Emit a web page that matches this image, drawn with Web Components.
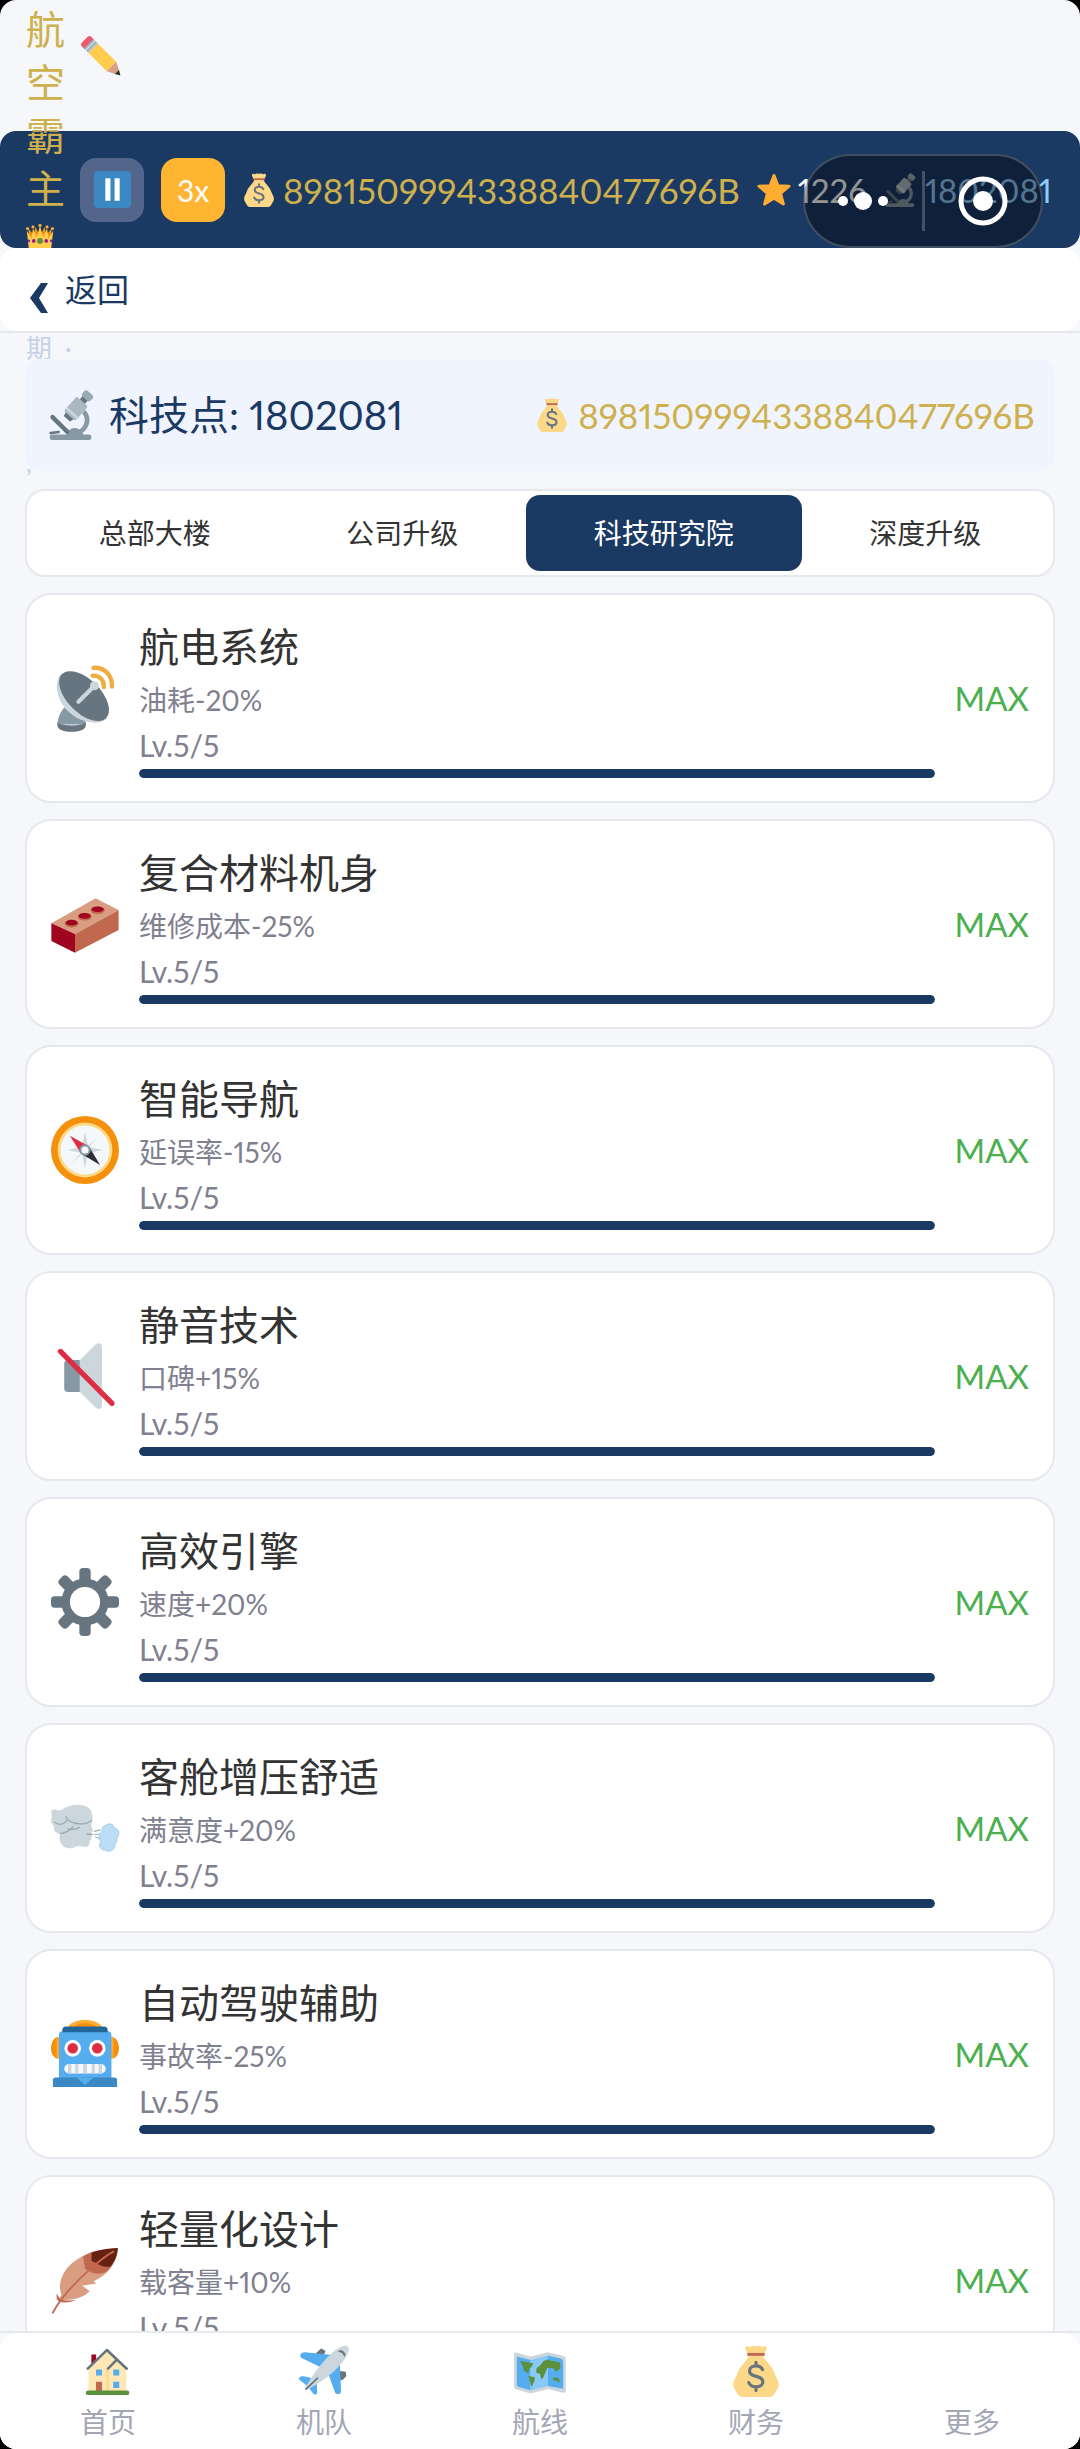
<!DOCTYPE html>
<html lang="zh-CN">
<head>
<meta charset="utf-8">
<meta name="viewport" content="width=device-width, initial-scale=1">
<title>航空霸主</title>
<style>
  html { background: #000; }
  body {
    margin: 0;
    font-family: Lato, "Noto Sans CJK SC", sans-serif;
    font-variant-numeric: proportional-nums;
    color: #333;
  }
</style>
</head>
<body>
<game-app>
  <game-header slot="header" name="航空霸主" money="8981509994338840477696B" stars="1226" points="1802081"></game-header>
  <back-bar slot="header">返回</back-bar>
  <points-panel points="1802081" money="8981509994338840477696B"></points-panel>
  <tab-bar>
    <tab-item>总部大楼</tab-item>
    <tab-item>公司升级</tab-item>
    <tab-item selected>科技研究院</tab-item>
    <tab-item>深度升级</tab-item>
  </tab-bar>
  <tech-card icon="satellite" name="航电系统" effect="油耗-20%" level="5" max="5"></tech-card>
  <tech-card icon="brick" name="复合材料机身" effect="维修成本-25%" level="5" max="5"></tech-card>
  <tech-card icon="compass" name="智能导航" effect="延误率-15%" level="5" max="5"></tech-card>
  <tech-card icon="mute" name="静音技术" effect="口碑+15%" level="5" max="5"></tech-card>
  <tech-card icon="gear" name="高效引擎" effect="速度+20%" level="5" max="5"></tech-card>
  <tech-card icon="wind" name="客舱增压舒适" effect="满意度+20%" level="5" max="5"></tech-card>
  <tech-card icon="robot" name="自动驾驶辅助" effect="事故率-25%" level="5" max="5"></tech-card>
  <tech-card icon="feather" name="轻量化设计" effect="载客量+10%" level="5" max="5"></tech-card>
  <nav-bar slot="footer">
    <nav-link icon="house">首页</nav-link>
    <nav-link icon="plane">机队</nav-link>
    <nav-link icon="map">航线</nav-link>
    <nav-link icon="bag">财务</nav-link>
    <nav-link icon="none">更多</nav-link>
  </nav-bar>
</game-app>

<script>
// All icons are drawn on a 36x36 grid.
const ICONS = {
  none: '',
  star: `<path fill="#ffac33" stroke="#ffac33" stroke-width="3" stroke-linejoin="round" d="M18 2.500l4.200 10.800L34 14l-9 7.500 3 11.500L18 26.700 8 33l3-11.500L2 14l11.800-.7z"/>`,
  pencil: `<g transform="rotate(45 18 18)">
      <path fill="#ea596e" d="M-4 14.500a2.500 2.500 0 0 1 2.500-2.500H2v12h-3.500A2.500 2.500 0 0 1-4 21.500z"/>
      <path fill="#99aab5" d="M1 12h6v12H1z"/>
      <path fill="#ccd6dd" d="M2.500 12H4v12H2.500zM5.500 12h1v12h-1z"/>
      <path fill="#ffcc4d" d="M7 12h23v12H7z"/>
      <path fill="#d99e82" d="M30 12l10 5v2l-10 5z"/>
      <path fill="#292f33" d="M37 15.500l4.500 2.500-4.500 2.500z"/>
    </g>`,
  crown: `<path fill="#f4900c" d="M4 18l-1-11 7 8 2-10 5 9 1-12 1 12 5-9 2 10 7-8-1 11z"/>
    <path fill="#ffcc4d" d="M4 36L1 10l6 9 2-12 5 11 4-14 4 14 5-11 2 12 6-9-3 26z"/>
    <g fill="#ffac33"><circle cx="2" cy="7" r="2"/><circle cx="9" cy="5" r="2"/><circle cx="18" cy="3" r="2"/><circle cx="27" cy="5" r="2"/><circle cx="34" cy="7" r="2"/></g>
    <circle cx="18" cy="23" r="3.800" fill="#5c913b"/>
    <g fill="#9b1b8f"><circle cx="10" cy="23" r="2.400"/><circle cx="26" cy="23" r="2.400"/><circle cx="3.500" cy="23" r="1.800"/><circle cx="32.500" cy="23" r="1.800"/></g>`,
  pause: `<rect width="36" height="36" rx="4" fill="#3b88c3"/>
    <path fill="#fff" d="M11 7h5v22h-5zM20 7h5v22h-5z"/>`,
  bag: `<path fill="#fdd888" d="M11.500 4.500C9.500 2 11 .3 13 1c1.500.8 2-.9 3.500-.5.8.5 2.200.5 3 0 1.500-.4 2 1.300 3.500.5 2-.7 3.500 1 1.500 3.500L23 8c2.800 4.500 6.500 7 8.200 12.500.8 2.500 2.800 4 2.500 7.500-.2 2.500-2 3.500-2.700 5.500-1 2-3 2.500-5 2.500H10c-2 0-4-.5-5-2.500-.7-2-2.500-3-2.700-5.500-.3-3.500 1.700-5 2.500-7.500C6.500 15 10.200 12.500 13 8z"/>
    <path fill="#bf6952" d="M12 5.500h12v2H12z"/>
    <path fill="none" stroke="#67757f" stroke-width="2.200" stroke-linecap="round" d="M22.500 17c-.8-1.800-2.500-2.500-4.500-2.500-2.600 0-4.500 1.400-4.500 3.500 0 5 9.300 2.400 9.300 7.500 0 2-2 3.500-4.800 3.500-2.400 0-4.200-.9-5-3M18 12v2.500M18 29v2.500"/>`,
  microscope: `<path fill="none" stroke="#8899a6" stroke-width="3.400" d="M26.500 15.500c4.500 5.500 2.500 12.500-5 16"/>
    <path fill="#8899a6" d="M3.500 32H14c1-3 4-5 7-4.500 2.500.3 4.500 2 5 4.500h4.500c2 0 2 4 0 4h-27c-2 0-2-4 0-4z"/>
    <path stroke="#66757f" stroke-width="3.200" stroke-linecap="round" d="M4 19.500l10.500 10.500"/>
    <path stroke="#66757f" stroke-width="1.800" stroke-linecap="round" d="M2.500 31l6-.8"/>
    <g transform="translate(21 13.300) rotate(42)">
      <path fill="#66757f" d="M-2.500-10h5v4h-5zM-4 6h8l-1 4h-6z"/>
      <rect x="-4" y="-15" width="8" height="5.500" rx="2" fill="#9aaab4"/>
      <rect x="-5.500" y="-6.800" width="11" height="14" rx="1.500" fill="#aab8c2"/>
      <path fill="#ccd6dd" d="M-5.500 3.500h11v2h-11z"/>
    </g>`,
  satellite: `<path fill="#8899a6" d="M7 23c-2.500 3-3.600 6-3.600 9h15c0-2.500-.8-4.500-2.400-6z"/>
    <path fill="#66757f" d="M3.400 31c2 2 13 2 15 0v1.500c0 4.500-15 4.500-15 0z"/>
    <path fill="#ccd6dd" d="M5.500 5C1.500 9 2.500 18 8.500 24.500S25.500 33 29.500 29z"/>
    <ellipse cx="17.500" cy="17" rx="16.500" ry="8.800" fill="#66757f" transform="rotate(45 17.500 17)"/>
    <path stroke="#ccd6dd" stroke-width="2.200" stroke-linecap="round" d="M14.500 20l8-8"/>
    <circle cx="23" cy="11.500" r="2.400" fill="#ccd6dd"/>
    <path fill="none" stroke="#f0ab41" stroke-width="2.300" stroke-linecap="round" d="M22.500 2c6-.4 10 4 9.800 10M22 6.200c3.800-.2 6.200 2.400 6 6"/>`,
  brick: `<path fill="#d99e82" d="M.2 17.600L23.600 4.400l12.200 6.200-23.100 12.700z"/>
    <path fill="#a0041e" d="M.2 17.600l12.500 5.700v9.900L.2 27z"/>
    <path fill="#c1694f" d="M12.700 23.300l23.100-12.700v10.600l-23.100 12z"/>
    <g fill="#c1694f"><ellipse cx="10.900" cy="17.800" rx="3.700" ry="2"/><ellipse cx="17.800" cy="14.200" rx="3.700" ry="2"/><ellipse cx="24.700" cy="10.700" rx="3.700" ry="2"/></g>
    <g fill="#a0041e"><ellipse cx="10.900" cy="17.300" rx="3.200" ry="1.500"/><ellipse cx="17.800" cy="13.700" rx="3.200" ry="1.500"/><ellipse cx="24.700" cy="10.200" rx="3.200" ry="1.500"/></g>`,
  compass: `<circle cx="18" cy="18" r="18" fill="#f4900c"/>
    <circle cx="18" cy="18" r="14.500" fill="#ffd983"/>
    <circle cx="18" cy="18" r="13" fill="#f5f8fa"/>
    <path fill="#ccd6dd" d="M18 8.500l1.500 7.500 5.500-5-5 5.500 7.500 1.500-7.500 1.500 5 5.500-5.500-5L18 27.500 16.500 20 11 25l5-5.500L8.500 18l7.500-1.500-5-5.500 5.500 5z"/>
    <path fill="#dd2e44" d="M10 10.500l10 5.500-4 4z"/>
    <path fill="#292f33" d="M26 26l-10-6 4-4z"/>
    <circle cx="18" cy="18" r="3" fill="#8899a6"/>
    <circle cx="18" cy="18" r="1.900" fill="#f5f8fa"/>`,
  mute: `<path fill="#8899a6" d="M9 9.500h7v17H9a2 2 0 0 1-2-2v-13a2 2 0 0 1 2-2z"/>
    <path fill="#ccd6dd" d="M15.200 9.700L23.500 1.500C25 .2 27 .5 27 2.500v31c0 2-2 2.500-3.500 1.200l-8.300-8.300z"/>
    <path stroke="#dd2e44" stroke-width="2.800" stroke-linecap="round" d="M5 5l27.300 27.500"/>`,
  gear: `<g fill="#66757f">
      <rect x="15" width="6" height="36" rx="2"/>
      <rect x="15" width="6" height="36" rx="2" transform="rotate(45 18 18)"/>
      <rect x="15" width="6" height="36" rx="2" transform="rotate(90 18 18)"/>
      <rect x="15" width="6" height="36" rx="2" transform="rotate(135 18 18)"/>
      <circle cx="18" cy="18" r="12.500"/>
    </g>
    <circle cx="18" cy="18" r="8" fill="#fff"/>`,
  wind: `<path fill="#ccd6dd" d="M.2 9.400C.5 7.500 3 8.500 5 8.800 8 6.500 12 5.500 15.500 5.800 20 6 22.200 9 21.900 12.500c.3 1.500-.3 2.500-.6 3.800 0 1.200.7 2 1.100 3.200-.8.600-1.200.8-1 1.800.8.700.5 1 0 1.600.2.900 0 1.600-.9 2-.1 1.600-.4 3-1.700 3-1.500.4-3-.8-4.800-.3-2 .6-3.500 1.600-5.700 1-3-.8-4.400-4.400-3.600-7.400-2-.2-3.800-2-3-4.200-1.600-.9-2-3-1.300-4.600z"/>
    <path fill="none" stroke="#99aab5" stroke-width=".7" stroke-linecap="round" d="M2 15c2 1.500 4.500 1.200 6.500-.8M8 12c1 3.500 9 5.500 13.500 2M5 20.800c2.500 0 5.500-1.500 6.500-3.500M9 18.500c3 .5 4.500.3 6-.8M19 21.300h2.800"/>
    <path fill="none" stroke="#99aab5" stroke-width=".6" stroke-linecap="round" d="M23 19.800l3-.8M23 21.300h3.500M23.500 22.800l3 1"/>
    <path fill="#bbddf5" stroke="#99c4e4" stroke-width=".4" d="M27 20c-.5-2.500 1.500-3.500 2-3.300 1.500-1.700 4.300-.8 4.500 1.300 2.500.2 3.500 3.500 1.200 5.400.8 1.600-.2 2.400-.9 3 .8 3.500-3.500 4.700-4.800 3.400-2.500.3-4.500-2.500-2.600-4.600-1.600-1.600-1-4.300.6-5.200z"/>`,
  robot: `<path fill="#ffac33" d="M9 4c1.500-5.300 16.500-5.300 18 0z"/>
    <path fill="#f4900c" d="M12 4c2-3 10-3 12 0z"/>
    <path fill="#f4900c" d="M4 9C1.500 9 0 12 0 15s1.500 5.500 4 5.500zM32 9c2.500 0 4 3 4 6s-1.500 5.500-4 5.500z"/>
    <path fill="#ffac33" d="M3 9.200h1.500v11H3zM31.500 9.200H33v11h-1.500z"/>
    <rect x="4.200" y="6" width="27.800" height="26" rx="2" fill="#55acee"/>
    <path fill="#226699" d="M8 3.500h20a2 2 0 0 1 2 2v1H6v-1a2 2 0 0 1 2-2z"/>
    <circle cx="11.500" cy="15" r="4.400" fill="#fff"/><circle cx="24.500" cy="15" r="4.400" fill="#fff"/>
    <circle cx="11.500" cy="15" r="2.800" fill="#dd2e44"/><circle cx="24.500" cy="15" r="2.800" fill="#dd2e44"/>
    <rect x="7" y="23.300" width="22" height="5" rx="2.500" fill="#f5f8fa"/>
    <path fill="#ccd6dd" d="M9 23.300h1.800v5H9zM12.800 23.300h1.700v5h-1.700zM17 23.300h2v5h-2zM21.500 23.300h1.700v5h-1.700zM25.200 23.300H27v5h-1.800z"/>
    <path fill="#3b88c3" d="M2.500 30.500h31A1.500 1.500 0 0 1 35 32v3.500H1V32a1.500 1.500 0 0 1 1.500-1.500z"/>
    <path fill="#55acee" d="M13.500 30.500h9l-4.500 4z"/>`,
  feather: `<path fill="#d99e82" d="M5.500 26c-1.800-5-.3-10.500 3.700-15C14 6 20.500 3.500 24 2.700L35.300 1c0 5-2.500 9.500-5.800 13-2.200 2-4.500 3.500-7 4.700l1.500 1.100-7.500 1.200 4 3C17.500 27 13 29 4 28.500z"/>
    <path fill="#c1694f" d="M17 5.500c2.500-1.400 5-2.300 7-2.800L35.300 1c0 5-2.500 9.500-5.800 12.500-3 1.500-6.300 1.500-8.500.3L18 12z"/>
    <path fill="#662113" d="M21.500 3.500c5-1.800 9-2.300 13.800-2.500 0 3.500-1.500 7-3.800 9.800-3 .7-5.500-.3-7.500-1.800l-2.500-1z"/>
    <path fill="#c1694f" d="M3 25l2 3.500c3.500.5 6 .3 8.500 0-3 1.300-6 1.800-9 1L3 28z"/>
    <path fill="none" stroke="#c1694f" stroke-width="1" stroke-linecap="round" d="M1 35.300C5 27.500 12 20 21 12c4-3.500 8-7 12-9"/>`,
  house: `<path fill="#a0041e" d="M6.500 6.500h3.300V15H6.500z"/>
    <path fill="#ffe8b6" d="M4.500 16L17.200 4l13.500 12v16H4.500z"/>
    <path fill="#ffcc4d" opacity=".5" d="M17 17h1.500v15H17z"/>
    <path fill="none" stroke="#66757f" stroke-width="1.800" stroke-linecap="round" stroke-linejoin="round" d="M4 16.400L17.200 3.500 31 16.400M18 16.400l5.800-5.900"/>
    <path fill="#55acee" d="M9.700 17h4.200v4.200H9.700zM21.600 17h4.200v4.200h-4.200zM21.600 25.500h4.200v4.200h-4.200z"/>
    <path fill="#c1694f" d="M9.700 25.500h4.200V32H9.700z"/>
    <rect x="2.700" y="31.500" width="30" height="3.200" rx="1.500" fill="#5c913b"/>`,
  plane: `<path fill="#66757f" d="M12 6l4-3.500 3 1.500-1 3zM29 18l4 .5.500 3-3 3-2-1z"/>
    <path fill="#55acee" d="M1.800 6.500c.5-1 1.500-1.500 3-1.500L24 7l-9 8L2.500 9C1.500 8.500 1.500 7.500 1.800 6.500zM29 12l.8 20c0 1.500-1 2-2 2s-2-.5-2.300-1.500L21 20zM1 22.500c.8-.8 2-1 3-.8l6 1.300-4 5L1.200 24.200c-.7-.5-.7-1.200-.2-1.700zM13 26l.3 7c0 1.300-2 1.700-2.700.7L7.800 30z"/>
    <path fill="#ccd6dd" d="M34.500 1c1.300 1.500.5 5-2 8.500-5.500 8-14.500 15.500-26.500 21.500-.7 0-1-.4-1-1C10.500 19.500 18 10 26 3.500c3.500-2.500 7-3.700 8.500-2.500z"/>
    <path stroke="#66757f" stroke-width="1.200" stroke-linecap="round" d="M5.500 30.500l8-7.500"/>
    <path fill="#66757f" d="M29 3.500c2 .2 3.500 1.500 4 3.500l-1 1.200c-.5-2-2-3.200-4.300-3.500z"/>`,
  map: `<path fill="#ccd6dd" d="M0 6.500C0 5.500 1 5 2 5.300L11.500 8 23.500 5l11 2.700c1 .3 1.300.8 1.300 1.800v22c0 1.200-.8 1.800-2 1.500L23.500 30.500l-12 3L2 30.800c-1.200-.3-2-1-2-2z"/>
    <path fill="#55acee" d="M2 8l9.500 2.300v21L4 29.300c-1.300-.3-2-.8-2-2z"/>
    <path fill="#88c9f9" d="M11.500 10.300l12-3v21l-12 3z"/>
    <path fill="#55acee" d="M23.500 7.300l8.500 2c1.500.4 2 1 2 2.500v18.500l-10.500-2z"/>
    <path fill="#5c913b" d="M4 11l4.500.8 5 1-1.500 2.500-1.500 1.500-.5 3-3-2-1-3.500zM10 21.500l4.500.8-.5 3-2 4-1-4.300zM20.500 11l2.500-1 2 .8 7 1.400v4l-3 2.300-2-2.500-4 0-2.500 6-1.500 2-1-4-2.800-1 .5-3 2.300-1.800zM27.300 22.300l3.500.5 1.200 3-3-1-2-.8z"/>`
};

class GameIcon extends HTMLElement {
  connectedCallback() {
    this.attachShadow({ mode: 'open' });
    this.shadowRoot.innerHTML = `
      <style>
        :host { display: block; flex: none; width: var(--size, 34px); height: var(--size, 34px); }
        svg { display: block; width: 100%; height: 100%; overflow: visible; }
      </style>
      <svg viewBox="0 0 36 36" aria-hidden="true">${ICONS[this.getAttribute('name')]}</svg>`;
  }
}

class GameApp extends HTMLElement {
  connectedCallback() {
    this.attachShadow({ mode: 'open' });
    this.shadowRoot.innerHTML = `
      <style>
        :host {
          display: flex;
          flex-direction: column;
          height: 100vh;
          overflow: hidden;
          border-radius: 16px;
          background: #f5f7fb;
        }
        main {
          position: relative;
          z-index: 2;
          flex: 1;
          min-height: 0;
          overflow: hidden;
          box-sizing: border-box;
          display: flex;
          flex-direction: column;
          gap: 16px;
          padding: 26px 25px 0;
        }
        main ::slotted(*) { flex: none; }
      </style>
      <slot name="header"></slot>
      <main><slot></slot></main>
      <slot name="footer"></slot>`;
  }
}

class GameHeader extends HTMLElement {
  connectedCallback() {
    this.attachShadow({ mode: 'open' });
    this.shadowRoot.innerHTML = `
      <style>
        :host { display: block; position: relative; z-index: 1; padding-top: 131px; }
        .band {
          position: relative;
          display: flex;
          align-items: center;
          gap: 17px;
          height: 117px;
          padding: 0 26px 0 80px;
          border-radius: 16px;
          background: #1a3a64;
          font-size: 33px;
          white-space: nowrap;
          box-sizing: border-box;
        }
        /* The company block is too narrow for its text and spills over the band on both sides */
        .company {
          position: absolute;
          left: 26px;
          top: 3px;
          display: flex;
          gap: 16px;
          color: #ceb04c;
          font-size: 39px;
          line-height: 53px;
        }
        .name { width: 40px; word-break: break-all; }
        .name game-icon { --size: 28px; margin-top: 8px; }
        .pencil { --size: 40px; margin-top: 34px; }
        .term {
          position: absolute;
          left: 26px;
          top: 329px;
          color: #c5d2e8;
          font-size: 26px;
          line-height: 38px;
        }
        .term span { margin-left: 6px; }
        button {
          display: flex;
          align-items: center;
          justify-content: center;
          flex: none;
          width: 64px;
          height: 64px;
          padding: 0;
          border: 0;
          border-radius: 16px;
          background: #53658b;
          color: #fff;
          font: inherit;
          font-size: 30px;
        }
        button game-icon { --size: 37px; }
        .speed { background: #ffb432; }
        .stat { display: flex; align-items: center; gap: 7px; color: #fff; line-height: 40px; }
        .money { color: #ceb04c; font-size: 35px; }
        .points { color: #90caf9; }
        .capsule {
          position: absolute;
          right: 37px;
          top: 23px;
          width: 240px;
          height: 94px;
          border: 2px solid rgba(255, 255, 255, .2);
          border-radius: 47px;
          box-sizing: border-box;
          background: rgba(0, 0, 0, .42);
          display: flex;
          align-items: center;
        }
        .capsule button { flex: 1; height: 60px; border-radius: 0; background: none; }
        .capsule button + button { border-left: 3px solid rgba(255, 255, 255, .22); }
      </style>
      <div class="band">
        <button aria-label="暂停"><game-icon name="pause"></game-icon></button>
        <button class="speed">3x</button>
        <span class="stat money"><game-icon name="bag"></game-icon>${this.getAttribute('money')}</span>
        <span class="stat"><game-icon name="star"></game-icon>${this.getAttribute('stars')}</span>
        <span class="stat points"><game-icon name="microscope"></game-icon>${this.getAttribute('points')}</span>
        <div class="capsule">
          <button aria-label="菜单"><svg width="52" height="20" fill="#fff"><circle cx="6" cy="10" r="5"/><circle cx="26" cy="10" r="9"/><circle cx="46" cy="10" r="5"/></svg></button>
          <button aria-label="关闭"><svg width="52" height="52"><circle cx="26" cy="26" r="22" fill="none" stroke="#fff" stroke-width="5"/><circle cx="26" cy="26" r="10" fill="#fff"/></svg></button>
        </div>
      </div>
      <div class="company">
        <div class="name">${this.getAttribute('name')}<game-icon name="crown"></game-icon></div>
        <game-icon class="pencil" name="pencil"></game-icon>
      </div>
      <div class="term">期 <span>·</span><br><br><br>,</div>`;
  }
}

class BackBar extends HTMLElement {
  connectedCallback() {
    this.attachShadow({ mode: 'open' });
    this.shadowRoot.innerHTML = `
      <style>
        :host { display: block; position: relative; z-index: 2; background: #f5f7fb; border-bottom: 2px solid #e6e8ee; }
        .bar { display: flex; align-items: center; height: 83px; padding: 0 28px; border-radius: 16px; background: #fff; }
        button {
          display: flex;
          align-items: center;
          gap: 15px;
          padding: 0;
          border: 0;
          background: none;
          color: #1a3a64;
          font: inherit;
          font-size: 32px;
          line-height: 48px;
        }
        svg { margin-top: 16px; }
      </style>
      <div class="bar">
        <button>
          <svg width="22" height="30" fill="#1a3a64" aria-hidden="true"><path d="M13 0h7l-9 15 9 15h-7L2 15z"/></svg>
          <slot></slot>
        </button>
      </div>`;
  }
}

class PointsPanel extends HTMLElement {
  connectedCallback() {
    this.attachShadow({ mode: 'open' });
    this.shadowRoot.innerHTML = `
      <style>
        :host {
          display: flex;
          align-items: center;
          justify-content: space-between;
          height: 112px;
          margin-bottom: 2px;
          padding: 0 20px 0 22px;
          border-radius: 16px;
          background: #f0f4ff;
        }
        span { display: flex; align-items: center; line-height: 48px; }
        .points { gap: 12px; color: #1a3a64; font-size: 40px; }
        .points game-icon { --size: 50px; }
        .money { gap: 9px; color: #ceb04c; font-size: 35px; }
      </style>
      <span class="points"><game-icon name="microscope"></game-icon>科技点: ${this.getAttribute('points')}</span>
      <span class="money"><game-icon name="bag"></game-icon>${this.getAttribute('money')}</span>`;
  }
}

class TabBar extends HTMLElement {
  connectedCallback() {
    this.attachShadow({ mode: 'open' });
    this.shadowRoot.innerHTML = `
      <style>
        :host {
          display: flex;
          height: 88px;
          padding: 4px;
          border: 2px solid #e6e8ee;
          border-radius: 20px;
          box-sizing: border-box;
          background: #fff;
        }
      </style>
      <slot></slot>`;
  }
}

class TabItem extends HTMLElement {
  connectedCallback() {
    this.attachShadow({ mode: 'open' });
    this.shadowRoot.innerHTML = `
      <style>
        :host { display: flex; flex: 1 1 auto; }
        button {
          flex: 1;
          padding: 0 0 2px;
          border: 0;
          border-radius: 14px;
          background: none;
          color: #333;
          font: inherit;
          font-size: 28px;
        }
        :host([selected]) button { background: #1a3a64; color: #fff; }
      </style>
      <button aria-pressed="${this.hasAttribute('selected')}"><slot></slot></button>`;
  }
}

class TechCard extends HTMLElement {
  connectedCallback() {
    const level = Number(this.getAttribute('level'));
    const max = Number(this.getAttribute('max'));

    this.attachShadow({ mode: 'open' });
    this.shadowRoot.innerHTML = `
      <style>
        :host {
          display: flex;
          align-items: center;
          gap: 20px;
          padding: 23px 24px;
          border: 2px solid #e6e8ee;
          border-radius: 26px;
          background: #fff;
        }
        game-icon { --size: 68px; }
        .info { flex: 1; min-width: 0; color: #808090; font-size: 28px; }
        .name { color: #333; font-size: 40px; line-height: 58px; }
        .effect { line-height: 48px; }
        .level { font-size: 30px; line-height: 42px; }
        .track { height: 9px; margin-top: 3px; border-radius: 5px; background: #e6e8ee; overflow: hidden; }
        .fill { width: ${level / max * 100}%; height: 100%; border-radius: 5px; background: #1a3a64; }
        .state { min-width: 72px; color: #4caf50; font-size: 33px; text-align: right; }
      </style>
      <game-icon name="${this.getAttribute('icon')}"></game-icon>
      <div class="info">
        <div class="name">${this.getAttribute('name')}</div>
        <div class="effect">${this.getAttribute('effect')}</div>
        <div class="level">Lv.${level}/${max}</div>
        <div class="track" role="progressbar" aria-label="${this.getAttribute('name')}" aria-valuenow="${level}" aria-valuemax="${max}"><div class="fill"></div></div>
      </div>
      <div class="state">${level === max ? 'MAX' : ''}</div>`;
  }
}

class NavBar extends HTMLElement {
  connectedCallback() {
    this.attachShadow({ mode: 'open' });
    this.shadowRoot.innerHTML = `
      <style>
        :host { display: block; flex: none; position: relative; z-index: 3; border-top: 2px solid #e6e8ee; background: #f5f7fb; }
        nav { display: flex; height: 116px; border-radius: 16px; background: #fff; }
      </style>
      <nav><slot></slot></nav>`;
  }
}

class NavLink extends HTMLElement {
  connectedCallback() {
    this.attachShadow({ mode: 'open' });
    this.shadowRoot.innerHTML = `
      <style>
        :host { display: block; flex: 1; }
        a {
          display: flex;
          flex-direction: column;
          align-items: center;
          gap: 5px;
          padding-top: 12px;
          color: #a3a6b5;
          font-size: 28px;
          line-height: 40px;
          text-decoration: none;
        }
        game-icon { --size: 52px; }
      </style>
      <a href="#"><game-icon name="${this.getAttribute('icon')}"></game-icon><slot></slot></a>`;
  }
}

customElements.define('game-icon', GameIcon);
customElements.define('game-app', GameApp);
customElements.define('game-header', GameHeader);
customElements.define('back-bar', BackBar);
customElements.define('points-panel', PointsPanel);
customElements.define('tab-bar', TabBar);
customElements.define('tab-item', TabItem);
customElements.define('tech-card', TechCard);
customElements.define('nav-bar', NavBar);
customElements.define('nav-link', NavLink);
</script>
</body>
</html>
